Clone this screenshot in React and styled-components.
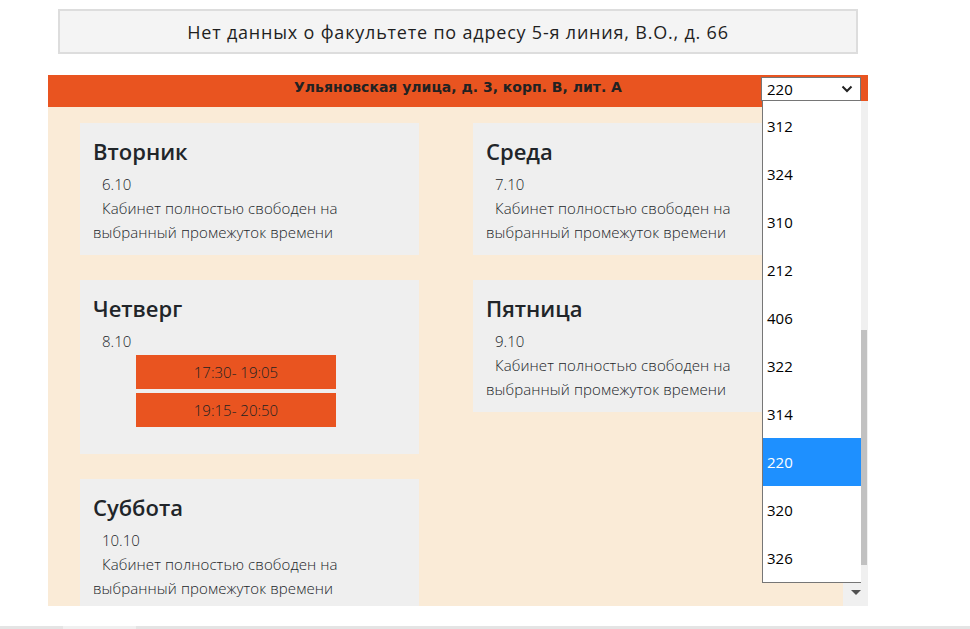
import styled, { createGlobalStyle } from 'styled-components';

const GlobalStyle = createGlobalStyle`
  html, body {
    margin: 0;
    padding: 0;
    background: #ffffff;
    font-family: "Open Sans", "Noto Sans", sans-serif;
    color: #212529;
    overflow: hidden;
  }
`;

const Page = styled.div`
  width: 970px;
  height: 629px;
  display: flex;
  flex-direction: column;
`;

const Wrap = styled.div`
  padding: 9px 0 0 48px;
  display: flex;
  flex-direction: column;
`;

const Banner = styled.div`
  box-sizing: border-box;
  width: 800px;
  height: 45px;
  margin-left: 10px;
  background: #f4f4f4;
  border: 2px solid #dddddd;
  display: flex;
  align-items: center;
  justify-content: center;
  font-size: 18px;
  letter-spacing: 0.8px;
  color: #1f1f1f;
`;

const Schedule = styled.section`
  width: 820px;
  margin-top: 21px;
  position: relative;
`;

const Header = styled.header`
  height: 32px;
  background: #e95420;
  display: grid;
  grid-template-columns: 1fr auto 1fr;
  align-items: start;
`;

const Address = styled.h3`
  grid-column: 2;
  margin: 0;
  padding-top: 4px;
  font-family: "DejaVu Sans", Verdana, sans-serif;
  font-size: 14px;
  font-weight: bold;
  color: #222222;
  white-space: nowrap;
`;

const Select = styled.div`
  grid-column: 3;
  justify-self: end;
  box-sizing: border-box;
  width: 100px;
  height: 24px;
  margin: 2px 7px 0 0;
  background: #ffffff;
  border: 1px solid #767676;
  display: flex;
  align-items: center;
  justify-content: space-between;
  padding: 0 7px 0 5px;
  font-size: 15px;
  color: #000000;
`;

const OptionList = styled.ul`
  position: absolute;
  top: 26px;
  left: 714px;
  width: 106px;
  height: 482px;
  margin: 0;
  padding: 0;
  list-style: none;
  display: flex;
  z-index: 5;
`;

const Options = styled.div`
  box-sizing: border-box;
  width: 99px;
  background: #ffffff;
  border-left: 1px solid #767676;
  border-bottom: 1px solid #767676;
  padding-top: 1px;
`;

const Option = styled.li`
  height: 48px;
  display: flex;
  align-items: center;
  padding-left: 4px;
  font-size: 15px;
  color: ${(p) => (p.$active ? '#ffffff' : '#000000')};
  background: ${(p) => (p.$active ? '#1e90ff' : 'transparent')};
`;

const ListTrack = styled.div`
  position: relative;
  width: 7px;
  background: #f0f0f0;
`;

const ListThumb = styled.div`
  position: absolute;
  top: 229px;
  left: 0;
  width: 6px;
  height: 235px;
  background: #c1c1c1;
`;

const Body = styled.div`
  height: 499px;
  display: flex;
`;

const Content = styled.div`
  flex: 1;
  background: #faebd7;
  overflow: hidden;
  padding: 16px 0 0 32px;
  display: grid;
  grid-template-columns: 339px 339px;
  column-gap: 54px;
  row-gap: 25px;
  align-items: start;
  align-content: start;
`;

const Track = styled.div`
  width: 25px;
  background: #f0f0f0;
  display: flex;
  align-items: flex-end;
  justify-content: center;
  padding-bottom: 10px;
  box-sizing: border-box;
`;

const Card = styled.article`
  background: #efefef;
  padding: 11px 13px 11px;
`;

const DayName = styled.h2`
  margin: 0 0 4px;
  font-size: 22px;
  font-weight: 600;
  line-height: 34px;
  color: #212529;
`;

const DateLine = styled.div`
  font-size: 15px;
  font-weight: 300;
  line-height: 24px;
  padding-left: 9px;
`;

const Note = styled.p`
  margin: 0;
  font-size: 15px;
  font-weight: 300;
  letter-spacing: 0.1px;
  line-height: 24px;
  text-indent: 9px;
`;

const Slots = styled.div`
  display: flex;
  flex-direction: column;
  gap: 4px;
  margin: 2px 0 16px 43px;
`;

const Slot = styled.div`
  width: 200px;
  height: 34px;
  background: #e95420;
  display: flex;
  align-items: center;
  justify-content: center;
  font-size: 15px;
  font-weight: 300;
  color: #222222;
`;

const BottomBar = styled.div`
  margin-top: 20px;
  height: 3px;
  background: linear-gradient(to right, #e4e4e4 0 63px, #f0f0f0 63px 136px, #e4e4e4 136px);
`;

const days = [
  { name: 'Вторник', date: '6.10', slots: [] },
  { name: 'Среда', date: '7.10', slots: [] },
  { name: 'Четверг', date: '8.10', slots: ['17:30- 19:05', '19:15- 20:50'] },
  { name: 'Пятница', date: '9.10', slots: [] },
  { name: 'Суббота', date: '10.10', slots: [] },
];

const rooms = ['312', '324', '310', '212', '406', '322', '314', '220', '320', '326'];

const Chevron = () => (
  <svg width="12" height="8" viewBox="0 0 12 8">
    <polyline points="1.5,1.5 6,6 10.5,1.5" fill="none" stroke="#222" strokeWidth="2" />
  </svg>
);

const DownArrow = () => (
  <svg width="10" height="6" viewBox="0 0 10 6">
    <polygon points="0,0 10,0 5,5" fill="#505050" />
  </svg>
);

const App = () => {
  return (
    <Page>
      <GlobalStyle />
      <Wrap>
        <Banner>Нет данных о факультете по адресу 5-я линия, В.О., д. 66</Banner>
        <Schedule>
          <Header>
            <Address>Ульяновская улица, д. 3, корп. В, лит. А</Address>
            <Select>
              <span>220</span>
              <Chevron />
            </Select>
          </Header>
          <OptionList>
            <Options>
              {rooms.map((r) => (
                <Option key={r} $active={r === '220'}>{r}</Option>
              ))}
            </Options>
            <ListTrack>
              <ListThumb />
            </ListTrack>
          </OptionList>
          <Body>
            <Content>
              {days.map((d) => (
                <Card key={d.name}>
                  <DayName>{d.name}</DayName>
                  <DateLine>{d.date}</DateLine>
                  {d.slots.length ? (
                    <Slots>
                      {d.slots.map((s) => (
                        <Slot key={s}>{s}</Slot>
                      ))}
                    </Slots>
                  ) : (
                    <Note>Кабинет полностью свободен на выбранный промежуток времени</Note>
                  )}
                </Card>
              ))}
            </Content>
            <Track>
              <DownArrow />
            </Track>
          </Body>
        </Schedule>
      </Wrap>
      <BottomBar />
    </Page>
  );
};

export default App;
